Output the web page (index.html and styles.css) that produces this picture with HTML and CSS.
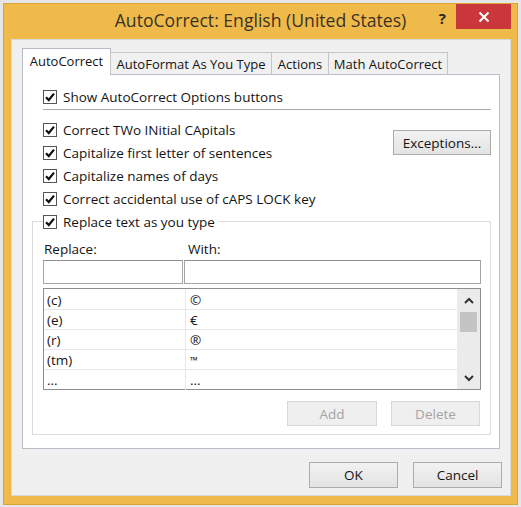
FILE: index.html
```html
<!DOCTYPE html>
<html lang="en">
<head>
<meta charset="utf-8">
<title>AutoCorrect: English (United States)</title>
<link rel="stylesheet" href="styles.css">
</head>
<body>
<div class="window">
  <div class="titlebar">
    <div class="title-spacer"></div>
    <div class="title">AutoCorrect: English (United States)</div>
    <div class="title-controls">
      <span class="help">?</span>
      <span class="close">
        <svg width="12" height="12" viewBox="0 0 12 12"><path d="M1.5 1.5 L10.5 10.5 M10.5 1.5 L1.5 10.5" stroke="#fff" stroke-width="2" fill="none"/></svg>
      </span>
    </div>
  </div>
  <div class="client">
    <div class="tabs">
      <div class="tab tab-active">AutoCorrect</div>
      <div class="tab tab-autoformat">AutoFormat As You Type</div>
      <div class="tab tab-actions">Actions</div>
      <div class="tab tab-math">Math AutoCorrect</div>
    </div>
    <div class="panel">
      <div class="row indent">
        <span class="check"><svg width="14" height="14" viewBox="0 0 14 14"><rect x="0.5" y="0.5" width="13" height="13" fill="#fff" stroke="#555"/><path d="M3 7.2 L5.8 10 L11 3.6" stroke="#111" stroke-width="2.2" fill="none"/></svg></span>
        <span>Show AutoCorrect Options buttons</span>
      </div>
      <div class="separator"></div>
      <div class="options">
        <div class="option-list">
          <div class="row">
            <span class="check"><svg width="14" height="14" viewBox="0 0 14 14"><rect x="0.5" y="0.5" width="13" height="13" fill="#fff" stroke="#555"/><path d="M3 7.2 L5.8 10 L11 3.6" stroke="#111" stroke-width="2.2" fill="none"/></svg></span>
            <span>Correct TWo INitial CApitals</span>
          </div>
          <div class="row">
            <span class="check"><svg width="14" height="14" viewBox="0 0 14 14"><rect x="0.5" y="0.5" width="13" height="13" fill="#fff" stroke="#555"/><path d="M3 7.2 L5.8 10 L11 3.6" stroke="#111" stroke-width="2.2" fill="none"/></svg></span>
            <span>Capitalize first letter of sentences</span>
          </div>
          <div class="row">
            <span class="check"><svg width="14" height="14" viewBox="0 0 14 14"><rect x="0.5" y="0.5" width="13" height="13" fill="#fff" stroke="#555"/><path d="M3 7.2 L5.8 10 L11 3.6" stroke="#111" stroke-width="2.2" fill="none"/></svg></span>
            <span>Capitalize names of days</span>
          </div>
          <div class="row">
            <span class="check"><svg width="14" height="14" viewBox="0 0 14 14"><rect x="0.5" y="0.5" width="13" height="13" fill="#fff" stroke="#555"/><path d="M3 7.2 L5.8 10 L11 3.6" stroke="#111" stroke-width="2.2" fill="none"/></svg></span>
            <span>Correct accidental use of cAPS LOCK key</span>
          </div>
        </div>
        <button class="btn btn-exceptions">Exceptions...</button>
      </div>
      <fieldset class="group">
        <legend class="row">
          <span class="check"><svg width="14" height="14" viewBox="0 0 14 14"><rect x="0.5" y="0.5" width="13" height="13" fill="#fff" stroke="#555"/><path d="M3 7.2 L5.8 10 L11 3.6" stroke="#111" stroke-width="2.2" fill="none"/></svg></span>
          <span>Replace text as you type</span>
        </legend>
        <div class="fields">
          <div class="label label-replace">Replace:</div>
          <div class="label label-with">With:</div>
          <div class="input"></div>
          <div class="input"></div>
        </div>
        <div class="list">
          <div class="list-body">
            <div class="list-row"><span class="c1">(c)</span><span class="c2">©</span></div>
            <div class="list-row"><span class="c1">(e)</span><span class="c2">€</span></div>
            <div class="list-row"><span class="c1">(r)</span><span class="c2">®</span></div>
            <div class="list-row"><span class="c1">(tm)</span><span class="c2 tm">™</span></div>
            <div class="list-row"><span class="c1">...</span><span class="c2">...</span></div>
          </div>
          <div class="scrollbar">
            <div class="sb-arrow"><svg width="10" height="7" viewBox="0 0 10 7"><path d="M1 6 L5 2 L9 6" stroke="#333" stroke-width="2" fill="none"/></svg></div>
            <div class="sb-thumb"></div>
            <div class="sb-track"></div>
            <div class="sb-arrow"><svg width="10" height="7" viewBox="0 0 10 7"><path d="M1 1 L5 5 L9 1" stroke="#333" stroke-width="2" fill="none"/></svg></div>
          </div>
        </div>
        <div class="list-buttons">
          <button class="btn btn-disabled btn-add">Add</button>
          <button class="btn btn-disabled btn-delete">Delete</button>
        </div>
      </fieldset>
    </div>
    <div class="footer">
      <button class="btn btn-footer">OK</button>
      <button class="btn btn-footer">Cancel</button>
    </div>
  </div>
</div>
</body>
</html>
```

FILE: styles.css
```css
html, body {
  margin: 0;
  padding: 0;
}

body {
  background: #e6e6e6;
  font-family: "Open Sans", "Noto Sans", sans-serif;
  font-size: 13.5px;
  color: #141414;
  width: 521px;
  height: 507px;
  overflow: hidden;
}

.window {
  margin: 3px 0 0 3px;
  width: 515px;
  height: 502px;
  background: #efba4a;
  box-shadow: inset 0 0 0 1px #d9a43a;
  display: flex;
  flex-direction: column;
  box-sizing: border-box;
}

.titlebar {
  height: 36px;
  display: grid;
  grid-template-columns: 1fr auto 1fr;
  align-items: start;
}

.title {
  font-size: 17.6px;
  color: #3a3226;
  padding-top: 5px;
  white-space: nowrap;
}

.title-controls {
  display: flex;
  justify-content: flex-end;
  align-items: flex-start;
  padding-right: 7px;
}

.help {
  font-weight: bold;
  font-size: 15px;
  color: #2b2620;
  margin-right: 10px;
  margin-top: 5px;
}

.close {
  width: 55px;
  height: 25px;
  background: #c9373b;
  display: flex;
  align-items: center;
  justify-content: center;
  margin-top: 1px;
}

.client {
  margin: 0 7px 9px 8px;
  flex: 1;
  background: #f0f0f0;
  border: 1px solid #d8d8d8;
  padding: 8px 8px 0 10px;
  display: flex;
  flex-direction: column;
}

.tabs {
  display: flex;
  align-items: flex-end;
  height: 26px;
  position: relative;
  z-index: 1;
  font-size: 13px;
}

.tab {
  height: 22px;
  box-sizing: border-box;
  border: 1px solid #c6c6c6;
  border-bottom: none;
  background: #f0f0f0;
  display: flex;
  align-items: center;
  justify-content: center;
  white-space: nowrap;
  margin-left: -1px;
}

.tab-active {
  height: 27px;
  margin-bottom: -1px;
  background: #fff;
  border-color: #b9b9c3;
  width: 89px;
  margin-left: 0;
  padding-bottom: 2px;
}

.tab-autoformat { width: 162px; }
.tab-actions { width: 58px; }
.tab-math { width: 120px; }

.panel {
  width: 478px;
  height: 375px;
  box-sizing: border-box;
  background: #fff;
  border: 1px solid #bfbcc9;
  padding: 10px 8px 0 8px;
  display: flex;
  flex-direction: column;
}

.row {
  display: flex;
  align-items: center;
  height: 23px;
  white-space: nowrap;
}

.indent {
  padding-left: 12px;
}

.check {
  width: 14px;
  height: 14px;
  margin-right: 6px;
  display: flex;
}

.separator {
  height: 1px;
  background: #a9a9a9;
  margin: 1px 0 8px 12px;
}

.options {
  display: flex;
  justify-content: space-between;
  align-items: flex-start;
}

.option-list {
  padding-left: 12px;
}

.btn {
  font-family: inherit;
  font-size: 13.5px;
  color: #141414;
  background: linear-gradient(#f2f2f2, #e3e3e3);
  border: 1px solid #acacac;
  box-sizing: border-box;
  padding: 0;
  display: flex;
  align-items: center;
  justify-content: center;
}

.btn-exceptions {
  width: 98px;
  height: 25px;
  margin-top: 12px;
}

.group {
  margin: 0 0 0 1px;
  border: 1px solid #dcdcdc;
  padding: 0 9px 8px 10px;
  min-width: 0;
}

.group legend {
  padding: 0 4px 0 0;
  margin: 0;
}

.fields {
  display: grid;
  grid-template-columns: 140px 1fr;
  column-gap: 1px;
  margin-top: 7px;
}

.label {
  height: 20px;
  line-height: 18px;
}

.label-replace { padding-left: 1px; }
.label-with { padding-left: 4px; }

.input {
  height: 24px;
  box-sizing: border-box;
  border: 1px solid #a5a5a5;
  border-top-color: #8f8f8f;
  background: #fff;
}

.list {
  margin-top: 4px;
  height: 102px;
  box-sizing: border-box;
  border: 1px solid #8e8e8e;
  display: flex;
}

.list-body {
  flex: 1;
  padding-top: 1px;
}

.list-row {
  display: grid;
  grid-template-columns: 142px 1fr;
  height: 20px;
  box-sizing: border-box;
  border-bottom: 1px solid #e8e8e8;
  align-items: center;
}

.list-row:last-child {
  border-bottom: none;
}

.c1 {
  padding-left: 3px;
  border-right: 1px solid #e8e8e8;
  height: 100%;
  display: flex;
  align-items: center;
}

.c2 {
  padding-left: 4px;
}

.tm {
  font-size: 10px;
}

.scrollbar {
  width: 23px;
  background: #ebebeb;
  display: flex;
  flex-direction: column;
  align-items: center;
}

.sb-arrow {
  height: 22px;
  display: flex;
  align-items: center;
  justify-content: center;
}

.sb-thumb {
  width: 17px;
  height: 20px;
  background: #c4c4c4;
  margin-top: 1px;
}

.sb-track {
  flex: 1;
}

.list-buttons {
  display: flex;
  justify-content: flex-end;
  gap: 14px;
  margin-top: 11px;
  padding-right: 1px;
}

.btn-disabled {
  height: 25px;
  background: #efefef;
  border-color: #d8d8d8;
  color: #a3a3a3;
}

.btn-add { width: 90px; }
.btn-delete { width: 89px; }

.footer {
  display: flex;
  justify-content: flex-end;
  gap: 15px;
  margin-top: 13px;
}

.btn-footer {
  width: 89px;
  height: 26px;
}
```
